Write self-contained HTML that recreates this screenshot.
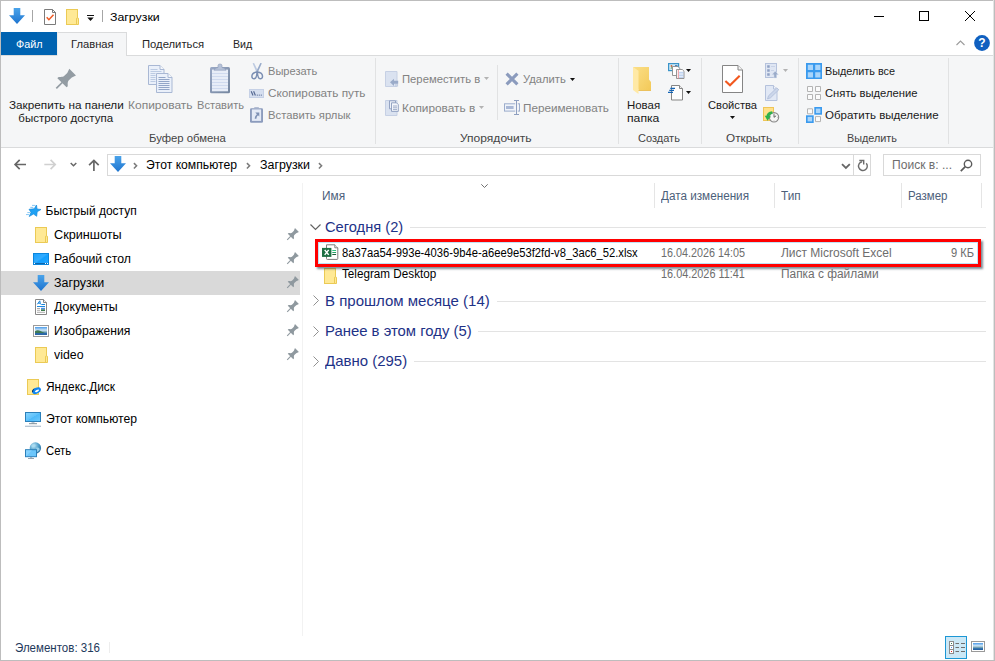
<!DOCTYPE html>
<html lang="ru"><head><meta charset="utf-8"><title>Загрузки</title>
<style>
html,body{margin:0;padding:0;background:#fff;}
body{width:995px;height:661px;overflow:hidden;font-family:'Liberation Sans',sans-serif;font-size:12px;}
#win{position:relative;width:995px;height:661px;background:#fff;overflow:hidden;}
#win *{position:absolute;box-sizing:border-box;}
.t{white-space:pre;line-height:16px;height:16px;transform-origin:0 0;}
svg{overflow:visible;}
svg *{position:static !important;}
.b{background:#bdbdbd;}
.vs{width:1px;background:#e1e2e3;top:58px;height:86px;}
.cs{width:1px;background:#e5e5e5;top:183px;height:25px;}
.gl{height:1px;background:#e3e3e3;}

</style></head>
<body>
<div id="win">
<!-- window frame -->
<div class="b" style="left:0;top:0;width:995px;height:1px"></div>
<div class="b" style="left:0;top:0;width:1px;height:661px"></div>
<div style="left:993px;top:0;width:1px;height:661px;background:#e4e4e4"></div><div class="b" style="left:994px;top:0;width:1px;height:661px"></div>
<div class="b" style="left:0;top:660px;width:995px;height:1px"></div>
<!-- ribbon -->
<div style="left:1px;top:55px;width:992px;height:93px;background:#f5f6f7;border-top:1px solid #dadbdc;border-bottom:1px solid #dadbdc"></div>
<div style="left:1px;top:32px;width:56px;height:23px;background:#0063b1"></div>
<div style="left:57px;top:32px;width:70px;height:24px;background:#f5f6f7;border:1px solid #dadbdc;border-bottom:none;border-left-color:#eceded"></div>
<div class="vs" style="left:375px"></div>
<div class="vs" style="left:618px"></div>
<div class="vs" style="left:701px"></div>
<div class="vs" style="left:798px"></div>
<div class="vs" style="left:948px"></div>
<div class="vs" style="left:497px;top:65px;height:55px"></div>
<!-- title bar icons -->
<svg style="left:9px;top:8px" width="16" height="16" viewBox="0 0 16 16"><defs><linearGradient id="gd1" x1="0" y1="0" x2="0" y2="1"><stop offset="0" stop-color="#4aa3ea"/><stop offset="1" stop-color="#1e74cf"/></linearGradient></defs><path d="M4.7 0h6.6v7.3H16L8 16 0 7.3h4.7z" fill="url(#gd1)"/></svg>
<div style="left:32px;top:10px;width:1px;height:12px;background:#a6a6a6"></div>
<svg style="left:44px;top:9px" width="12" height="16" viewBox="0 0 12 16"><path d="M.5.500h8l3 3v12H.5z" fill="#fff" stroke="#7b7b7b"/><path d="M8.5.500v3h3" fill="none" stroke="#7b7b7b"/><path d="M2.700 8.300l2.200 2.400 4.600-5" fill="none" stroke="#ef5a24" stroke-width="1.500"/></svg>
<svg style="left:66px;top:9px" width="13" height="16" viewBox="0 0 13 16"><rect x=".5" y=".500" width="11" height="15" fill="#ffe995" stroke="#ebca55"/><path d="M10.500 15.500V10q0-1.200 1-1.200t1 1.200v5.500z" fill="#ffe995" stroke="#ebca55"/></svg>
<svg style="left:87px;top:15px" width="7" height="6" viewBox="0 0 7 6"><path d="M0 0h7v1H0zM.3 2.600h6.400L3.500 6z" fill="#111"/></svg>
<div style="left:102px;top:10px;width:1px;height:12px;background:#a6a6a6"></div>
<!-- window controls -->
<svg style="left:874px;top:10px" width="104" height="12" viewBox="0 0 104 12"><path d="M0 6.500h10" stroke="#000" fill="none"/><rect x="45.500" y="1.500" width="9" height="9" fill="none" stroke="#000"/><path d="M91 1l10 10M101 1l-10 10" stroke="#000" stroke-width="1" fill="none"/></svg>
<svg style="left:956px;top:40px" width="9" height="6" viewBox="0 0 9 6"><path d="M.5 5l4-4 4 4" fill="none" stroke="#9b9b9b" stroke-width="1.100"/></svg>
<svg style="left:974px;top:35px" width="16" height="16" viewBox="0 0 16 16"><circle cx="8" cy="8" r="7.900" fill="#1060c0"/><text x="8" y="12.300" font-family="Liberation Sans, sans-serif" font-weight="bold" font-size="12" fill="#fff" text-anchor="middle">?</text></svg>
<!-- ribbon: clipboard group -->
<svg style="left:56px;top:68px" width="21" height="21" viewBox="0 0 21 21"><g transform="translate(0.100,20.600) rotate(-45)" fill="#939ca3"><path d="M0.300,-0.850H9V0.850H0.300z"/><path d="M8.3,-6.500Q9.500,-6.900 10.500,-6C12,-4.300 13,-3.400 14.500,-3.200L19,-3.200L23.400,-4.700L23.400,4.700L19,3.200L14.500,3.200C13,3.400 12,4.300 10.500,6Q9.500,6.900 8.300,6.500Z"/></g></svg>
<svg style="left:148px;top:65px" width="24" height="28" viewBox="0 0 24 28"><g fill="#eaf0fa" stroke="#a9b8d4"><path d="M.5.500h11.500l4 4v15H.5z"/><path d="M12 .5v4h4" fill="#f6f9fd"/><path d="M8.500 8.500h11.500l4 4v15H8.500z"/><path d="M20 8.500v4h4" fill="#f6f9fd"/></g><path d="M2.500 4.500h7M2.500 6.500h11M2.500 8.500h5M2.500 10.500h5M2.500 12.500h5M2.500 14.500h5M2.500 16.500h5" stroke="#bccbe3" fill="none"/><path d="M10.500 12.500h7M10.500 14.500h11M10.500 16.500h11M10.500 18.500h11M10.500 20.500h11M10.500 22.500h11M10.500 24.500h11" stroke="#93a6c8" fill="none"/></svg>
<svg style="left:210px;top:64px" width="20" height="30" viewBox="0 0 20 30"><defs><linearGradient id="gpb" x1="0" y1="0" x2="1" y2="1"><stop offset="0" stop-color="#9aa9c6"/><stop offset="1" stop-color="#74869f"/></linearGradient></defs><rect x="0" y="3" width="20" height="26.300" rx="1.500" fill="url(#gpb)"/><rect x="2" y="5.600" width="16" height="21.700" fill="#e7edf8"/><path d="M2 9.500h16M2 12.500h16M2 15.500h16M2 18.500h16M2 21.500h16M2 24.500h16" stroke="#cfdaef" fill="none"/><path d="M4 6.200q1-2.400 4-2.600V1.500q0-1.500 2-1.500t2 1.500v2.100q3 .2 4 2.600z" fill="#b6c2d8" stroke="#8b9bb8" stroke-width=".6"/></svg>
<!-- scissors -->
<svg style="left:251px;top:62px" width="13" height="17" viewBox="0 0 13 17"><path d="M1.600 1.200L3.100.900 7.200 9.600 5.500 10.300z" fill="#bccae1"/><path d="M10.800 1.200L9.300.900 5.200 9.600 6.900 10.300z" fill="#97aaca"/><path d="M6.100 10C3.500 10.300 1 11.500.9 14 .8 16.400 2 16.700 3.200 16.700 5 16.700 5.800 14 6.100 10zM6.300 10C8.900 10.300 11.400 11.500 11.500 14 11.600 16.400 10.400 16.700 9.200 16.700 7.400 16.700 6.600 14 6.300 10z" fill="none" stroke="#7b8fb3" stroke-width="1.500" stroke-linejoin="round"/></svg>
<!-- copy path -->
<svg style="left:249px;top:89px" width="15" height="9" viewBox="0 0 15 9"><rect x=".5" y=".500" width="14" height="8" fill="#d6dfef" stroke="#c6d1e6"/><path d="M2.200 2.200l1.800 4.300M4.600 2.200l1.800 4.300" stroke="#586b94" stroke-width="1.200" fill="none"/><circle cx="8.300" cy="6.100" r=".65" fill="#586b94"/><circle cx="10.300" cy="6.100" r=".65" fill="#586b94"/><circle cx="12.300" cy="6.100" r=".65" fill="#586b94"/></svg>
<!-- paste shortcut -->
<svg style="left:250px;top:107px" width="13" height="16" viewBox="0 0 13 16"><rect x="0" y="1.200" width="13" height="14.600" rx="1.300" fill="#8c9cbd"/><rect x="1.900" y="2.400" width="9.200" height="11.500" fill="#e4eaf6"/><rect x="4.200" y=".200" width="4.700" height="1.100" rx=".4" fill="#9dabc8"/><path d="M5.300 5.600h4v4l-1.300-1.300q-1.600 1.300-1.600 3.500h-1.700q0-3 2.200-4.600z" fill="#7d90b4"/></svg>
<!-- move to -->
<svg style="left:385px;top:71px" width="14" height="16" viewBox="0 0 14 16"><path d="M.5.500h11.500v15H.5z" fill="#dae2f0" stroke="#c6d0e4"/><path d="M5 11.300l4-3.600v2.100h4.200v3H9v2.100z" fill="#9aabc9"/><path d="M10.800 13v2.500M12.600 13v2.500" stroke="#b9c5db" stroke-width=".8"/></svg>
<svg style="left:484px;top:77px" width="5" height="3" viewBox="0 0 5 3"><path d="M0 0h5L2.500 3z" fill="#b3b3b3"/></svg>
<!-- copy to -->
<svg style="left:385px;top:100px" width="14" height="16" viewBox="0 0 14 16"><path d="M.5.500h11.500v15H.5z" fill="#dae2f0" stroke="#c6d0e4"/><path d="M4.500.800h6v8h-6z" fill="#eef2f9" stroke="#8a9bbd" stroke-width=".9"/><path d="M6.500 2.800h5l1.800 1.800v6.800h-6.800z" fill="#f3f6fb" stroke="#8a9bbd" stroke-width=".9"/><path d="M8 6h4M8 7.800h4M8 9.600h4" stroke="#8a9bbd" stroke-width=".8"/></svg>
<svg style="left:479px;top:106px" width="5" height="3" viewBox="0 0 5 3"><path d="M0 0h5L2.500 3z" fill="#b3b3b3"/></svg>
<!-- delete -->
<svg style="left:505px;top:72px" width="14" height="14" viewBox="0 0 14 14"><path d="M1.600 1.600l10.800 10.800M12.400 1.600L1.600 12.400" stroke="#8b9bbd" stroke-width="3.100" fill="none"/></svg>
<svg style="left:570px;top:77.5px" width="5" height="3" viewBox="0 0 5 3"><path d="M0 0h5L2.500 3z" fill="#111"/></svg>
<!-- rename -->
<svg style="left:504px;top:100px" width="16" height="15" viewBox="0 0 16 15"><rect x=".5" y="3.800" width="15" height="7.300" fill="#f0f4fa" stroke="#9cadcc"/><rect x="2" y="6" width="7.600" height="3" fill="#a9b8d6"/><rect x="11.200" y="1" width="2.600" height="13" fill="#f5f6f7"/><path d="M10 .5h5M10 14.500h5M12.500.500v14" stroke="#8e9fc0" fill="none"/></svg>
<!-- new folder big -->
<svg style="left:633px;top:67px" width="19" height="28" viewBox="0 0 19 28"><defs><linearGradient id="gnf" x1="0" y1="0" x2="1" y2="1"><stop offset="0" stop-color="#fbdf88"/><stop offset="1" stop-color="#f3c958"/></linearGradient></defs><path d="M0 0h16v12.500l2 2.500v8.500H5.500L0 0z" fill="url(#gnf)"/><path d="M0 0l5.500 3.800V27L0 23z" fill="#ffe9a6"/><path d="M5.500 23.500H18" stroke="#e9b94a" stroke-width=".8"/></svg>
<!-- new item -->
<svg style="left:668px;top:63px" width="17" height="16" viewBox="0 0 17 16"><rect x=".6" y=".600" width="10" height="7" fill="#cfe9f7" stroke="#3a94c9" stroke-width="1.200"/><path d="M2.500 5.500l1-1.500 1 1.500z" fill="#5c9a48"/><circle cx="3.500" cy="3" r=".9" fill="#c9683c"/><path d="M7 2.500h2.500" stroke="#3a78b5" stroke-width=".9"/><path d="M4.500 3.500h5.500l1.700 1.700v7.300h-7.200z" fill="#fff" stroke="#8a8a8a" stroke-width=".9"/><path d="M8.500 6.500h5.800l1.700 1.700v7.300H8.500z" fill="#fff" stroke="#8a8a8a" stroke-width=".9"/><path d="M10.300 7v8.500" stroke="#e8858b" stroke-width=".9"/><path d="M11 9.300h4.500M11 11h4.500M11 12.700h4.500M11 14.300h4.500" stroke="#8fb4e8" stroke-width=".7"/></svg>
<svg style="left:686px;top:69px" width="5" height="3" viewBox="0 0 5 3"><path d="M0 0h5L2.500 3z" fill="#111"/></svg>
<!-- easy access -->
<svg style="left:667px;top:85px" width="17" height="16" viewBox="0 0 17 16"><path d="M4.500.500h8l3 3v11.500H4.500z" fill="#fdfdfd" stroke="#858585"/><path d="M12.500.500v3h3" fill="#f0f0f0" stroke="#858585"/><path d="M3.300 3.400h4.700M2.300 5.300h4.700M1 7.300h5" stroke="#1565b5" stroke-width="1.200"/></svg>
<svg style="left:686px;top:91.2px" width="5" height="3" viewBox="0 0 5 3"><path d="M0 0h5L2.500 3z" fill="#111"/></svg>
<!-- properties big -->
<svg style="left:722px;top:65px" width="21" height="28" viewBox="0 0 21 28"><path d="M.5.500h15.500l4.500 4.500v22.500H.5z" fill="#fff" stroke="#858585"/><path d="M16 .5v4.500h4.500" fill="#f4f4f4" stroke="#858585"/><path d="M3.400 16l4.600 4.300L17.700 10.700" fill="none" stroke="#f2581f" stroke-width="2.100"/></svg>
<svg style="left:730px;top:116px" width="5" height="3" viewBox="0 0 5 3"><path d="M0 0h5L2.500 3z" fill="#111"/></svg>
<!-- open (disabled) -->
<svg style="left:765px;top:63px" width="13" height="15" viewBox="0 0 13 15"><rect x=".5" y=".500" width="11" height="14" fill="#dfe6f3" stroke="#b5c2dc"/><path d="M2.200 2.200h2.500v2.500H2.200zM2.200 6.200h2.500v2.500H2.200zM2.200 10.200h2.500v2.500H2.200z" fill="#8fa1c4"/><path d="M6 3.500h4M6 7.500h3" stroke="#c3cee3" stroke-width=".8"/><path d="M10.200 8l3.300 3.700h-2v3.300h-2.600v-3.300h-2z" fill="#9aabc9" stroke="#dfe6f3" stroke-width=".5"/></svg>
<svg style="left:783px;top:69px" width="5" height="3" viewBox="0 0 5 3"><path d="M0 0h5L2.500 3z" fill="#b3b3b3"/></svg>
<!-- edit (disabled) -->
<svg style="left:765px;top:85px" width="14" height="16" viewBox="0 0 14 16"><path d="M.5.500h8l3.500 3.500v11.500H.5z" fill="#e1e8f5" stroke="#b5c2dc"/><path d="M8.500.500v3.500h3.500" fill="#f1f4fa" stroke="#b5c2dc"/><path d="M2.500 14l1-3.200 8.300-8 2 2-8.300 8z" fill="#cbd6ea" stroke="#a9b8d6" stroke-width=".7"/></svg>
<!-- history -->
<svg style="left:763px;top:107px" width="17" height="17" viewBox="0 0 17 17"><rect x=".5" y=".500" width="10" height="13" fill="#ffe08a" stroke="#efc557"/><circle cx="11" cy="10.300" r="4.700" fill="#f6f6f6" stroke="#8a8a8a" stroke-width="1.100"/><path d="M11 7.200v3.100l2.100-1.500" fill="none" stroke="#555" stroke-width=".9"/><path d="M11 6.300v.8M11 13.500v.8M7 10.300h.8M14.200 10.300h.8" stroke="#999" stroke-width=".7"/><path d="M9.400 5.600Q4.700 6 4.700 10" fill="none" stroke="#2db24a" stroke-width="2.700"/><path d="M1.700 8.800h6.200L4.600 13.800z" fill="#2db24a"/></svg>
<!-- select group -->
<svg style="left:806px;top:63px" width="16" height="16" viewBox="0 0 16 16"><rect width="16" height="16" fill="#3a9aee"/><path d="M1.800 1.800h5.200v5.200H1.800zM9.200 1.800h5.200v5.200H9.200zM1.800 9.200h5.200v5.200H1.800zM9.200 9.200h5.200v5.200H9.200z" fill="#a9d5fb"/></svg>
<svg style="left:807px;top:86px" width="14" height="14" viewBox="0 0 14 14"><path d="M.5.500h5v5h-5zM8.500.500h5v5h-5zM.5 8.500h5v5h-5zM8.500 8.500h5v5h-5z" fill="#fbfbfb" stroke="#b4b4b4"/></svg>
<svg style="left:806px;top:107px" width="16" height="16" viewBox="0 0 16 16"><path d="M1.500 1.800h5v5h-5zM9.500 9.600h5v5h-5z" fill="#fbfbfb" stroke="#b4b4b4"/><rect x="8.300" y="0" width="7.700" height="7.700" fill="#3a9aee"/><rect x="9.900" y="1.600" width="4.500" height="4.500" fill="#a9d5fb"/><rect x="0" y="8.300" width="7.700" height="7.700" fill="#3a9aee"/><rect x="1.600" y="9.900" width="4.500" height="4.500" fill="#a9d5fb"/></svg>
<!-- address bar -->
<svg style="left:14px;top:159px" width="13" height="11" viewBox="0 0 13 11"><path d="M12 5.500H1.200M5.700.900L1.100 5.500l4.600 4.600" fill="none" stroke="#666" stroke-width="1.700"/></svg>
<svg style="left:44px;top:159px" width="13" height="11" viewBox="0 0 13 11"><path d="M.3 5.500h11M6.600.900l4.600 4.600-4.600 4.600" fill="none" stroke="#d0d0d0" stroke-width="1.700"/></svg>
<svg style="left:70px;top:162px" width="7" height="5" viewBox="0 0 7 5"><path d="M.7 1l2.800 2.700L6.300 1" fill="none" stroke="#666" stroke-width="1.500"/></svg>
<svg style="left:88px;top:159px" width="12" height="12" viewBox="0 0 12 12"><path d="M5.900 12V1.400M1.100 6.200l4.800-4.800 4.800 4.800" fill="none" stroke="#666" stroke-width="1.700"/></svg>
<div style="left:107px;top:154px;width:764px;height:22px;border:1px solid #d9d9d9;background:#fff"></div>
<div style="left:853px;top:155px;width:1px;height:20px;background:#d9d9d9"></div>
<div style="left:883px;top:154px;width:98px;height:22px;border:1px solid #d9d9d9;background:#fff"></div>
<svg style="left:110px;top:156px" width="16" height="16" viewBox="0 0 16 16"><defs><linearGradient id="gd2" x1="0" y1="0" x2="0" y2="1"><stop offset="0" stop-color="#4aa3ea"/><stop offset="1" stop-color="#1e74cf"/></linearGradient></defs><path d="M4.7 0h6.6v7.3H16L8 16 0 7.3h4.7z" fill="url(#gd2)"/></svg>
<svg style="left:133px;top:162px" width="5" height="7" viewBox="0 0 5 7"><path d="M.9 1.100l2.700 2.700L.9 6.500" fill="none" stroke="#7a7a7a" stroke-width="1.500"/></svg>
<svg style="left:246px;top:162px" width="5" height="7" viewBox="0 0 5 7"><path d="M.9 1.100l2.700 2.700L.9 6.500" fill="none" stroke="#7a7a7a" stroke-width="1.500"/></svg>
<svg style="left:318px;top:162px" width="5" height="7" viewBox="0 0 5 7"><path d="M.9 1.100l2.700 2.700L.9 6.500" fill="none" stroke="#7a7a7a" stroke-width="1.500"/></svg>
<svg style="left:841px;top:163px" width="10" height="6" viewBox="0 0 10 6"><path d="M1 1.200l3.900 3.800L8.800 1.200" fill="none" stroke="#666" stroke-width="1.800"/></svg>
<svg style="left:857px;top:159px" width="12" height="13" viewBox="0 0 12 13"><path d="M9.270 4.270A4.400 4.400 0 1 1 5.140 2.770" fill="none" stroke="#6b6b6b" stroke-width="1.400"/><path d="M2.300 1.500H6.700V5.600" fill="none" stroke="#6b6b6b" stroke-width="1.400"/></svg>
<svg style="left:960px;top:159px" width="13" height="13" viewBox="0 0 13 13"><circle cx="8" cy="5" r="3.700" fill="none" stroke="#5a5a5a" stroke-width="1.400"/><path d="M5.300 7.700L.8 12.200" stroke="#5a5a5a" stroke-width="1.700"/></svg>
<!-- column headers -->
<div class="cs" style="left:654px"></div>
<div class="cs" style="left:774px"></div>
<div class="cs" style="left:901px"></div>
<div class="cs" style="left:981px"></div>
<svg style="left:481px;top:184px" width="8" height="5" viewBox="0 0 8 5"><path d="M.3.300l3.200 3.200L6.700.300" fill="none" stroke="#707070" stroke-width="1"/></svg>
<!-- nav pane -->
<div style="left:302px;top:183px;width:1px;height:453px;background:#f2f2f2"></div>
<div style="left:1px;top:271px;width:299px;height:24px;background:#d9d9d9"></div>
<svg style="left:26px;top:204px" width="16" height="14" viewBox="0 0 16 14"><path d="M6 1.400h3.300M4.300 3.400h3M1.300 8.600h2.800M0 10.600h3" stroke="#86c8f6" stroke-width="1" fill="none"/><path d="M10.500 1L11 5l4 .5-3.800 2.200-.5 4.600L7.500 10l-4.300 2.500L5 8.300l-2-3 5.200-.5z" fill="#1fa1f4" stroke="#1a8bdb" stroke-width=".7" stroke-linejoin="round"/></svg>
<svg style="left:35px;top:227px" width="13" height="16" viewBox="0 0 13 16"><rect x=".5" y=".500" width="11" height="15" fill="#ffe995" stroke="#ebca55"/><path d="M10.500 15.500V10q0-1.200 1-1.200t1 1.200v5.500z" fill="#ffe995" stroke="#ebca55"/></svg>
<svg style="left:33px;top:253px" width="16" height="12" viewBox="0 0 16 12"><defs><linearGradient id="gdk" x1="0" y1="0" x2="1" y2="1"><stop offset="0" stop-color="#19a0ff"/><stop offset=".45" stop-color="#33acff"/><stop offset=".55" stop-color="#12a0ff"/><stop offset="1" stop-color="#2ba8ff"/></linearGradient></defs><rect x=".5" y=".500" width="15" height="11" fill="url(#gdk)" stroke="#0c86dc"/><path d="M1 10.500h14" stroke="#0b66ad"/><path d="M1 10.500h1M12 10.500h1M14 10.500h1" stroke="#fff"/></svg>
<svg style="left:33px;top:275px" width="16" height="16" viewBox="0 0 16 16"><defs><linearGradient id="gd3" x1="0" y1="0" x2="0" y2="1"><stop offset="0" stop-color="#4aa3ea"/><stop offset="1" stop-color="#1e74cf"/></linearGradient></defs><path d="M4.7 0h6.6v7.3H16L8 16 0 7.3h4.7z" fill="url(#gd3)"/></svg>
<svg style="left:35px;top:299px" width="12" height="16" viewBox="0 0 12 16"><path d="M.5.500h8l3 3v12H.5z" fill="#fff" stroke="#878787"/><path d="M8.500.500v3h3" fill="#f3f3f3" stroke="#878787"/><path d="M2.300 5.300L4.800 1.800 5.400 5.300M3.200 4.200h2" fill="none" stroke="#1b87dd" stroke-width="1"/><path d="M6.300 5.500h3.700M2 7.500h8" stroke="#1b87dd"/><path d="M2 9.500h3M2 11.300h3M2 13.300h8" stroke="#a3a3a3" stroke-width=".9"/><rect x="6" y="8.800" width="4" height="1.600" fill="#4f8fe9"/><rect x="6" y="10.400" width="4" height="1.600" fill="#3c7a4c"/></svg>
<svg style="left:33px;top:325px" width="16" height="12" viewBox="0 0 16 12"><rect x=".5" y=".500" width="15" height="11" fill="#fff" stroke="#9b9b9b"/><defs><linearGradient id="gim" x1="0" y1="0" x2="0" y2="1"><stop offset="0" stop-color="#4a9be9"/><stop offset=".4" stop-color="#cfe6f8"/><stop offset=".62" stop-color="#7aa7b5"/><stop offset=".8" stop-color="#2f6fae"/><stop offset="1" stop-color="#1f5a9c"/></linearGradient></defs><rect x="2" y="2" width="12" height="8" fill="url(#gim)"/><path d="M2 6.200q2.500-1.700 5-.5t5 2.300H2z" fill="#3f7a55"/><path d="M2 8h12v2H2z" fill="#2b68a8" opacity=".85"/></svg>
<svg style="left:35px;top:347px" width="13" height="16" viewBox="0 0 13 16"><rect x=".5" y=".500" width="11" height="15" fill="#ffe995" stroke="#ebca55"/><path d="M10.500 15.500V10q0-1.200 1-1.200t1 1.200v5.500z" fill="#ffe995" stroke="#ebca55"/></svg>
<svg style="left:27px;top:379px" width="15" height="16" viewBox="0 0 15 16"><rect x=".5" y=".500" width="11" height="15" fill="#ffe995" stroke="#ebca55"/><g transform="rotate(-27 9.500 11.700)"><ellipse cx="9.500" cy="11.700" rx="4.700" ry="2.900" fill="#0f86f2"/><path d="M5 11q.6-2.300 4-2.300-2.600.8-3.300 2.800z" fill="#0c2b4d"/><ellipse cx="9.900" cy="12" rx="2.200" ry=".95" fill="#fff"/></g></svg>
<svg style="left:25px;top:412px" width="16" height="15" viewBox="0 0 16 15"><defs><linearGradient id="gpc" x1="0" y1="0" x2="1" y2="1"><stop offset="0" stop-color="#8ad6ff"/><stop offset=".5" stop-color="#5fc2fb"/><stop offset=".52" stop-color="#4db9f9"/><stop offset="1" stop-color="#6cc9fc"/></linearGradient></defs><rect x=".5" y=".500" width="15" height="9" fill="url(#gpc)" stroke="#2b7fb9"/><path d="M6.500 10.300h3v1H6.500z" fill="#9fb0bf"/><path d="M4 11.700h8" stroke="#71828f" stroke-width=".9"/><path d="M0 14.300h16" stroke="#b5c3d1" stroke-width="1.300"/></svg>
<svg style="left:25px;top:442px" width="17" height="17" viewBox="0 0 17 17"><defs><radialGradient id="ggl" cx=".35" cy=".3" r=".8"><stop offset="0" stop-color="#bfe6f7"/><stop offset=".55" stop-color="#4c9dc9"/><stop offset="1" stop-color="#24679a"/></radialGradient></defs><circle cx="10.400" cy="6" r="5.700" fill="url(#ggl)"/><path d="M6.500 3.500q2-1.800 3.500-.8t-.5 2-2.500.8zM11.500 5.500q2-.5 3 1t-1.500 3-2-1.500z" fill="#a9dcf1" opacity=".8"/><rect x=".5" y="7.700" width="11" height="7" fill="#6cc6fb" stroke="#2b7fb9"/><path d="M1 8.200h6L1 14.200z" fill="#8fd6ff" opacity=".7"/><path d="M5 15.100h2.200v.9H5z" fill="#9fb0bf"/><path d="M3 16.500h6" stroke="#8b9aa8" stroke-width=".9"/></svg>
<svg style="left:287px;top:230px" width="10" height="10" viewBox="0 0 10 10"><g transform="translate(0,10) rotate(-45) scale(0.6)" fill="#8f999f"><path d="M0.500,-0.900H9V0.900H0.500z"/><path d="M8.3,-6.500Q9.500,-6.800 10.500,-6C12,-4 13,-3 14.500,-2.800L19,-2.800L23.400,-4.600L23.400,4.600L19,2.800L14.500,2.800C13,3 12,4 10.500,6Q9.500,6.800 8.300,6.500Z"/></g></svg>
<svg style="left:287px;top:254px" width="10" height="10" viewBox="0 0 10 10"><g transform="translate(0,10) rotate(-45) scale(0.6)" fill="#8f999f"><path d="M0.500,-0.900H9V0.900H0.500z"/><path d="M8.3,-6.500Q9.500,-6.800 10.500,-6C12,-4 13,-3 14.500,-2.800L19,-2.800L23.400,-4.600L23.400,4.600L19,2.800L14.500,2.800C13,3 12,4 10.500,6Q9.500,6.800 8.300,6.500Z"/></g></svg>
<svg style="left:287px;top:278px" width="10" height="10" viewBox="0 0 10 10"><g transform="translate(0,10) rotate(-45) scale(0.6)" fill="#8f999f"><path d="M0.500,-0.900H9V0.900H0.500z"/><path d="M8.3,-6.500Q9.500,-6.800 10.500,-6C12,-4 13,-3 14.500,-2.800L19,-2.800L23.400,-4.600L23.400,4.600L19,2.800L14.500,2.800C13,3 12,4 10.500,6Q9.500,6.800 8.300,6.500Z"/></g></svg>
<svg style="left:287px;top:302px" width="10" height="10" viewBox="0 0 10 10"><g transform="translate(0,10) rotate(-45) scale(0.6)" fill="#8f999f"><path d="M0.500,-0.900H9V0.900H0.500z"/><path d="M8.3,-6.500Q9.500,-6.800 10.500,-6C12,-4 13,-3 14.500,-2.800L19,-2.800L23.400,-4.600L23.400,4.600L19,2.800L14.500,2.800C13,3 12,4 10.500,6Q9.500,6.800 8.300,6.500Z"/></g></svg>
<svg style="left:287px;top:326px" width="10" height="10" viewBox="0 0 10 10"><g transform="translate(0,10) rotate(-45) scale(0.6)" fill="#8f999f"><path d="M0.500,-0.900H9V0.900H0.500z"/><path d="M8.3,-6.500Q9.500,-6.800 10.500,-6C12,-4 13,-3 14.500,-2.800L19,-2.800L23.400,-4.600L23.400,4.600L19,2.800L14.500,2.800C13,3 12,4 10.500,6Q9.500,6.800 8.300,6.500Z"/></g></svg>
<svg style="left:287px;top:350px" width="10" height="10" viewBox="0 0 10 10"><g transform="translate(0,10) rotate(-45) scale(0.6)" fill="#8f999f"><path d="M0.500,-0.900H9V0.900H0.500z"/><path d="M8.3,-6.500Q9.500,-6.800 10.500,-6C12,-4 13,-3 14.500,-2.800L19,-2.800L23.400,-4.600L23.400,4.600L19,2.800L14.500,2.800C13,3 12,4 10.500,6Q9.500,6.800 8.300,6.500Z"/></g></svg>
<!-- groups -->
<svg style="left:310px;top:224px" width="11" height="6" viewBox="0 0 11 6"><path d="M.5.500l5 5 5-5" fill="none" stroke="#636363" stroke-width="1.200"/></svg>
<svg style="left:313px;top:295px" width="6" height="11" viewBox="0 0 6 11"><path d="M.5.500l5 5-5 5" fill="none" stroke="#919191" stroke-width="1"/></svg>
<svg style="left:313px;top:326px" width="6" height="11" viewBox="0 0 6 11"><path d="M.5.500l5 5-5 5" fill="none" stroke="#919191" stroke-width="1"/></svg>
<svg style="left:313px;top:356px" width="6" height="11" viewBox="0 0 6 11"><path d="M.5.500l5 5-5 5" fill="none" stroke="#919191" stroke-width="1"/></svg>
<div class="gl" style="left:410px;top:227px;width:576px"></div>
<div class="gl" style="left:497px;top:301px;width:489px"></div>
<div class="gl" style="left:478px;top:331px;width:508px"></div>
<div class="gl" style="left:414px;top:361px;width:572px"></div>
<!-- rows -->
<div style="left:318px;top:242px;width:660px;height:22px;border:1px solid #bfe2f5;background:#fff"></div>
<svg style="left:322px;top:244px" width="16" height="16" viewBox="0 0 16 16"><path d="M4.500.800h8.300l3 3V14.600q0 .8-.8.800H5.300q-.8 0-.8-.8z" fill="#fff" stroke="#7d7d7d" stroke-width="1"/><path d="M12.800.800v3h3" fill="#eee" stroke="#7d7d7d" stroke-width=".9"/><rect x="0" y="3.900" width="9.400" height="9" fill="#1e7044"/><path d="M2.700 5.900l4 5M6.700 5.900l-4 5" stroke="#fff" stroke-width="1.500"/><path d="M10.300 6.500h3.800" stroke="#33c481"/><path d="M10.300 8.500h3.800" stroke="#21a366"/><path d="M10.300 10.500h3.800" stroke="#185c37"/></svg>
<svg style="left:324px;top:268px" width="13" height="16" viewBox="0 0 13 16"><rect x=".5" y=".500" width="11" height="15" fill="#ffe995" stroke="#ebca55"/><path d="M10.500 15.500V10q0-1.200 1-1.200t1 1.200v5.500z" fill="#ffe995" stroke="#ebca55"/></svg>
<!-- red highlight -->
<div style="left:315px;top:239px;width:666px;height:28px;border:3px solid #ff0000;box-shadow:1.500px 1.500px 2px rgba(40,65,80,.6)"></div>
<!-- status view buttons -->
<div style="left:109px;top:642px;width:1px;height:11px;background:#ededed"></div>
<div style="left:945px;top:636px;width:22px;height:23px;background:#cce8f6;border:1px solid #1c97d5"></div>
<svg style="left:949px;top:641px" width="16" height="13" viewBox="0 0 16 13"><rect x=".5" y=".500" width="4" height="12" fill="#fff" stroke="#8c8c8c"/><path d="M.5 4.500h4M.5 8.500h4" stroke="#8c8c8c"/><rect x="2" y="2" width="1" height="1" fill="#3b7a57"/><rect x="2" y="6" width="1" height="1" fill="#4d8df0"/><rect x="2" y="10" width="1" height="1" fill="#e02020"/><path d="M6.500 2.500h3.500M12 2.500h4M6.500 6.500h3.500M12 6.500h4M6.500 10.500h3.500M12 10.500h4" stroke="#6e6e6e" stroke-width="1.100"/></svg>
<svg style="left:971px;top:641px" width="14" height="11" viewBox="0 0 14 11"><rect x=".5" y=".500" width="13" height="10" fill="#fff" stroke="#9a9a9a"/><rect x="2" y="2" width="10" height="7" fill="url(#gim)"/></svg>

<!-- text -->
<span class="t" style="left:109.5px;top:9.0px;font-size:11.5px;color:#000;transform:scaleX(1.074);">Загрузки</span>
<span class="t" style="left:15.5px;top:36.0px;font-size:11.5px;color:#fff;transform:scaleX(0.941);">Файл</span>
<span class="t" style="left:70.9px;top:36.0px;font-size:11.5px;color:#262626;transform:scaleX(0.973);">Главная</span>
<span class="t" style="left:142.1px;top:36.0px;font-size:11.5px;color:#262626;transform:scaleX(0.978);">Поделиться</span>
<span class="t" style="left:233.3px;top:36.0px;font-size:11.5px;color:#262626;transform:scaleX(0.923);">Вид</span>
<span class="t" style="left:8.8px;top:97.0px;font-size:11.5px;color:#1a1a1a;transform:scaleX(1.021);">Закрепить на панели</span>
<span class="t" style="left:18.3px;top:110.0px;font-size:11.5px;color:#1a1a1a;">быстрого доступа</span>
<span class="t" style="left:128.1px;top:97.0px;font-size:11.5px;color:#828282;transform:scaleX(1.043);">Копировать</span>
<span class="t" style="left:196.7px;top:97.0px;font-size:11.5px;color:#828282;transform:scaleX(0.964);">Вставить</span>
<span class="t" style="left:149.0px;top:130.0px;font-size:11.5px;color:#444444;transform:scaleX(0.984);">Буфер обмена</span>
<span class="t" style="left:267.9px;top:63.0px;font-size:11.5px;color:#828282;transform:scaleX(0.962);">Вырезать</span>
<span class="t" style="left:267.9px;top:85.0px;font-size:11.5px;color:#828282;transform:scaleX(1.025);">Скопировать путь</span>
<span class="t" style="left:267.9px;top:107.0px;font-size:11.5px;color:#828282;transform:scaleX(0.979);">Вставить ярлык</span>
<span class="t" style="left:402.3px;top:71.0px;font-size:11.5px;color:#828282;transform:scaleX(0.980);">Переместить в</span>
<span class="t" style="left:402.3px;top:100.0px;font-size:11.5px;color:#828282;transform:scaleX(1.028);">Копировать в</span>
<span class="t" style="left:459.9px;top:130.0px;font-size:11.5px;color:#444444;transform:scaleX(1.046);">Упорядочить</span>
<span class="t" style="left:522.7px;top:71.0px;font-size:11.5px;color:#828282;transform:scaleX(0.975);">Удалить</span>
<span class="t" style="left:522.7px;top:100.0px;font-size:11.5px;color:#828282;transform:scaleX(1.019);">Переименовать</span>
<span class="t" style="left:627.0px;top:97.0px;font-size:11.5px;color:#1a1a1a;transform:scaleX(0.994);">Новая</span>
<span class="t" style="left:627.0px;top:110.0px;font-size:11.5px;color:#1a1a1a;transform:scaleX(1.061);">папка</span>
<span class="t" style="left:638.3px;top:130.0px;font-size:11.5px;color:#444444;transform:scaleX(0.958);">Создать</span>
<span class="t" style="left:707.9px;top:97.0px;font-size:11.5px;color:#1a1a1a;transform:scaleX(0.972);">Свойства</span>
<span class="t" style="left:726.3px;top:130.0px;font-size:11.5px;color:#444444;transform:scaleX(1.021);">Открыть</span>
<span class="t" style="left:825.0px;top:63.0px;font-size:11.5px;color:#1a1a1a;transform:scaleX(0.941);">Выделить все</span>
<span class="t" style="left:825.0px;top:85.0px;font-size:11.5px;color:#1a1a1a;transform:scaleX(0.976);">Снять выделение</span>
<span class="t" style="left:825.0px;top:107.0px;font-size:11.5px;color:#1a1a1a;">Обратить выделение</span>
<span class="t" style="left:847.4px;top:130.0px;font-size:11.5px;color:#444444;transform:scaleX(0.942);">Выделить</span>
<span class="t" style="left:145.5px;top:157.0px;font-size:12px;color:#000;transform:scaleX(1.014);">Этот компьютер</span>
<span class="t" style="left:259.5px;top:157.0px;font-size:12px;color:#000;transform:scaleX(1.035);">Загрузки</span>
<span class="t" style="left:891.5px;top:157.0px;font-size:12px;color:#6d6d6d;transform:scaleX(1.006);">Поиск в: ...</span>
<span class="t" style="left:321.6px;top:188.0px;font-size:12px;color:#4c607a;transform:scaleX(0.988);">Имя</span>
<span class="t" style="left:661.3px;top:188.0px;font-size:12px;color:#4c607a;transform:scaleX(0.976);">Дата изменения</span>
<span class="t" style="left:780.9px;top:188.0px;font-size:12px;color:#4c607a;transform:scaleX(0.979);">Тип</span>
<span class="t" style="left:908.0px;top:188.0px;font-size:12px;color:#4c607a;transform:scaleX(0.958);">Размер</span>
<span class="t" style="left:325.3px;top:219.0px;font-size:14.5px;color:#1e3287;transform:scaleX(1.011);">Сегодня (2)</span>
<span class="t" style="left:324.8px;top:293.0px;font-size:14.5px;color:#1e3287;transform:scaleX(1.035);">В прошлом месяце (14)</span>
<span class="t" style="left:324.8px;top:323.0px;font-size:14.5px;color:#1e3287;transform:scaleX(1.026);">Ранее в этом году (5)</span>
<span class="t" style="left:324.8px;top:353.0px;font-size:14.5px;color:#1e3287;transform:scaleX(1.033);">Давно (295)</span>
<span class="t" style="left:341.8px;top:245.0px;font-size:12px;color:#000;transform:scaleX(0.935);">8a37aa54-993e-4036-9b4e-a6ee9e53f2fd-v8_3ac6_52.xlsx</span>
<span class="t" style="left:661.3px;top:245.0px;font-size:12px;color:#6d6d6d;transform:scaleX(0.898);">16.04.2026 14:05</span>
<span class="t" style="left:780.9px;top:245.0px;font-size:12px;color:#6d6d6d;">Лист Microsoft Excel</span>
<span class="t" style="left:950.8px;top:245.0px;font-size:12px;color:#6d6d6d;transform:scaleX(0.929);">9 КБ</span>
<span class="t" style="left:341.7px;top:266.0px;font-size:12px;color:#000;transform:scaleX(0.975);">Telegram Desktop</span>
<span class="t" style="left:661.3px;top:266.0px;font-size:12px;color:#6d6d6d;transform:scaleX(0.907);">16.04.2026 11:41</span>
<span class="t" style="left:780.9px;top:266.0px;font-size:12px;color:#6d6d6d;transform:scaleX(0.990);">Папка с файлами</span>
<span class="t" style="left:45.6px;top:203.0px;font-size:12px;color:#000;">Быстрый доступ</span>
<span class="t" style="left:53.5px;top:227.0px;font-size:12px;color:#000;transform:scaleX(1.057);">Скриншоты</span>
<span class="t" style="left:53.5px;top:251.0px;font-size:12px;color:#000;transform:scaleX(1.021);">Рабочий стол</span>
<span class="t" style="left:53.5px;top:275.0px;font-size:12px;color:#000;transform:scaleX(1.037);">Загрузки</span>
<span class="t" style="left:53.5px;top:299.0px;font-size:12px;color:#000;transform:scaleX(1.030);">Документы</span>
<span class="t" style="left:53.5px;top:323.0px;font-size:12px;color:#000;transform:scaleX(1.013);">Изображения</span>
<span class="t" style="left:53.5px;top:347.0px;font-size:12px;color:#000;transform:scaleX(1.028);">video</span>
<span class="t" style="left:45.5px;top:379.0px;font-size:12px;color:#000;transform:scaleX(0.989);">Яндекс.Диск</span>
<span class="t" style="left:45.5px;top:411.0px;font-size:12px;color:#000;transform:scaleX(1.014);">Этот компьютер</span>
<span class="t" style="left:45.5px;top:443.0px;font-size:12px;color:#000;transform:scaleX(0.944);">Сеть</span>
<span class="t" style="left:14.5px;top:640.0px;font-size:12px;color:#1e395b;transform:scaleX(0.960);">Элементов: 316</span>
</div>
</body></html>
